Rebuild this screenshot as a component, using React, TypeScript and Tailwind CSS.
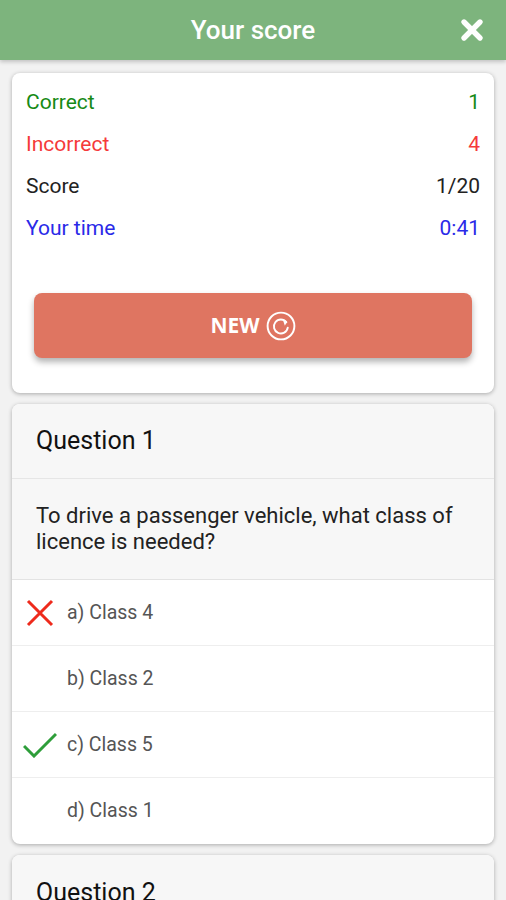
import { X } from "lucide-react";

const stats = [
  { label: "Correct", value: "1", color: "text-[#168a16]" },
  { label: "Incorrect", value: "4", color: "text-[#f53a3a]" },
  { label: "Score", value: "1/20", color: "text-[#222]" },
  { label: "Your time", value: "0:41", color: "text-[#2a2ae8]" },
];

const options = [
  { text: "a) Class 4", mark: "wrong" },
  { text: "b) Class 2", mark: "" },
  { text: "c) Class 5", mark: "right" },
  { text: "d) Class 1", mark: "" },
];

const RefreshIcon = () => (
  <svg width="30" height="30" viewBox="0 0 28 28" fill="none" stroke="white" strokeWidth="1.8">
    <circle cx="14" cy="14" r="12.5" />
    <path d="M19 10.5 A6.5 6.5 0 1 0 20.3 15.5" strokeLinecap="round" />
    <path d="M15.5 7.5 L19.8 9.8 L17.6 13.8 Z" fill="white" stroke="none" />
  </svg>
);

export default function App() {
  return (
    <div className="w-full min-h-screen bg-[#f2f2f2] font-['Roboto',sans-serif] overflow-hidden">
      {/* Header */}
      <div className="relative h-[60px] bg-[#7db47d] flex items-center justify-center shadow-[0_2px_4px_rgba(0,0,0,0.2)]">
        <h1 className="text-white text-[26px] font-medium">Your score</h1>
        <button className="absolute right-[18px] top-[14px] text-white">
          <X size={32} strokeWidth={4} />
        </button>
      </div>

      <div className="px-3 pt-[13px] flex flex-col gap-[11px]">
        {/* Score card */}
        <div className="bg-white rounded-lg shadow-[0_1px_4px_rgba(0,0,0,0.3)] pt-[9px] pb-[35px]">
          <div className="px-[14px] flex flex-col">
            {stats.map((s) => (
              <div key={s.label} className={`flex justify-between h-[42px] items-center text-[21px] ${s.color}`}>
                <span>{s.label}</span>
                <span>{s.value}</span>
              </div>
            ))}
          </div>
          <div className="px-[22px] mt-[43px]">
            <button className="w-full h-[65px] rounded-lg bg-[#df7561] shadow-[0_4px_6px_rgba(0,0,0,0.3)] flex items-center justify-center gap-[6px]">
              <span className="text-white font-['Open_Sans',sans-serif] font-bold text-[21px]">NEW</span>
              <RefreshIcon />
            </button>
          </div>
        </div>

        {/* Question 1 */}
        <div className="bg-white rounded-lg shadow-[0_1px_4px_rgba(0,0,0,0.3)] overflow-hidden">
          <div className="bg-[#f7f7f7]">
            <div className="h-[75px] flex items-center px-6 text-[25px] text-[#111] border-b border-[#e6e6e6]">
              Question 1
            </div>
            <div className="px-6 pt-[24px] pb-[24px] text-[22px] leading-[26px] text-[#222] border-b border-[#e3e3e3]">
              To drive a passenger vehicle, what class of licence is needed?
            </div>
          </div>
          {options.map((o, i) => (
            <div
              key={o.text}
              className={`h-[66px] flex items-center ${i < options.length - 1 ? "border-b border-[#eeeeee]" : ""}`}
            >
              <div className="w-[55px] flex justify-center">
                {o.mark === "wrong" && (
                  <svg width="28" height="28" viewBox="0 0 28 28" stroke="#ee2a1c" strokeWidth="3">
                    <path d="M2 2 L26 26 M26 2 L2 26" />
                  </svg>
                )}
                {o.mark === "right" && (
                  <svg width="34" height="26" viewBox="0 0 34 26" fill="none" stroke="#2e9e3a" strokeWidth="3">
                    <path d="M1 14 L11 24 L33 2" />
                  </svg>
                )}
              </div>
              <span className="text-[19.5px] text-[#555]">{o.text}</span>
            </div>
          ))}
        </div>

        {/* Question 2 */}
        <div className="bg-white rounded-lg shadow-[0_1px_4px_rgba(0,0,0,0.3)] overflow-hidden">
          <div className="bg-[#f7f7f7] h-[75px] flex items-center px-6 text-[25px] text-[#111]">
            Question 2
          </div>
        </div>
      </div>
    </div>
  );
}
